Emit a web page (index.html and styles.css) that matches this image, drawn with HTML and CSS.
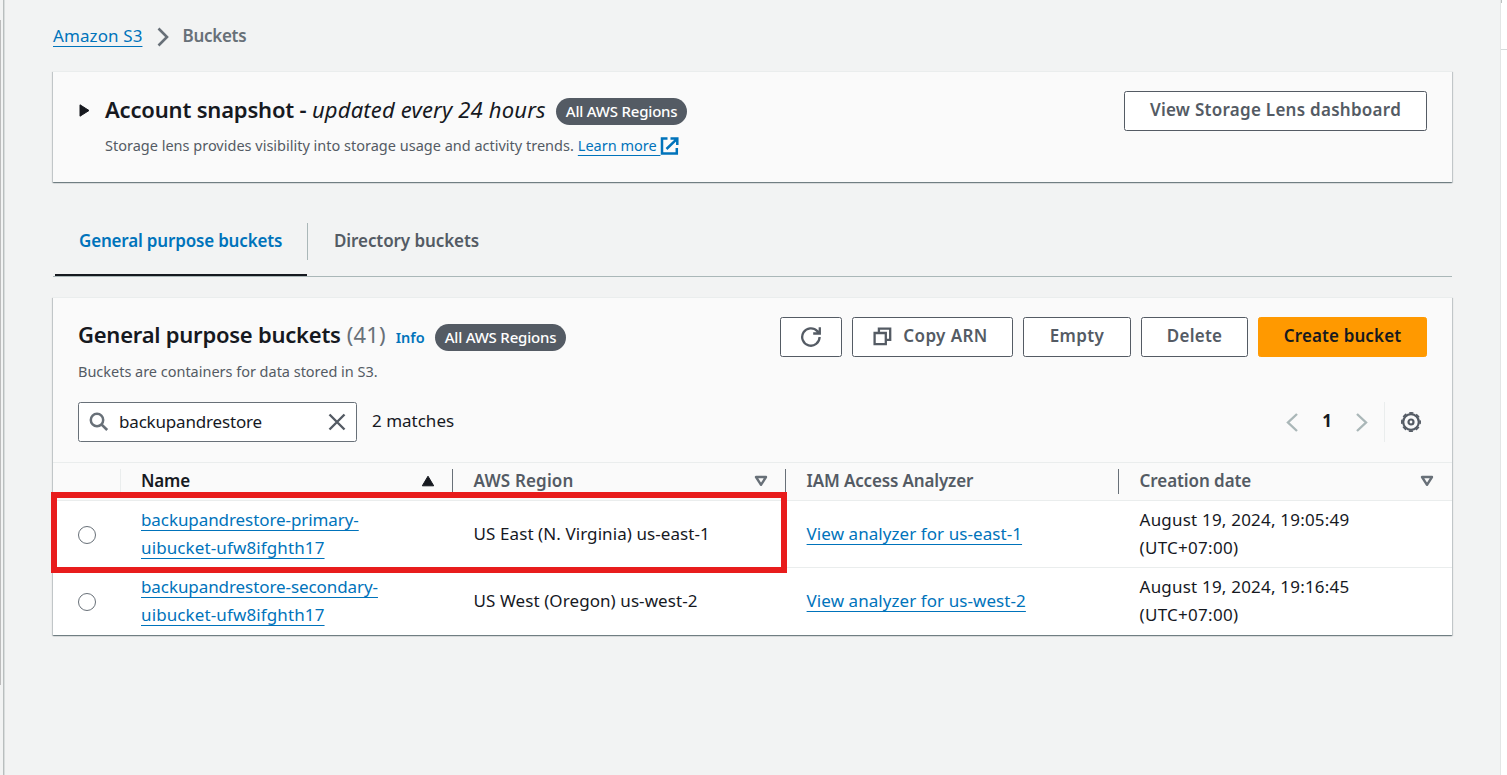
FILE: index.html
```html
<!DOCTYPE html>
<html lang="en">
<head>
<meta charset="utf-8">
<title>Buckets - Amazon S3</title>
<link rel="stylesheet" href="styles.css">
</head>
<body>
<div class="app">
  <div class="rail-left"><div class="scrollbar"></div></div>
  <main class="content">
    <nav class="breadcrumb">
      <a class="link crumb-link" href="#">Amazon S3</a>
      <svg class="crumb-sep" width="12" height="20" viewBox="0 0 12 20"><path d="M1.5 1.5 10 10 1.5 18.5" fill="none" stroke="#687078" stroke-width="2.6"/></svg>
      <span class="crumb-current">Buckets</span>
    </nav>

    <section class="card snapshot">
      <svg class="caret" width="11" height="13" viewBox="0 0 11 13"><path d="M1 .8 10 6.5 1 12.2z" fill="#16191f" stroke="#16191f" stroke-linejoin="round"/></svg>
      <div class="snapshot-body">
        <div class="title-line">
          <h2 class="title snap-title">Account snapshot - <em class="snap-em">updated every 24 hours</em></h2>
          <span class="badge">All AWS Regions</span>
        </div>
        <p class="desc snap-desc"><span class="snap-text">Storage lens provides visibility into storage usage and activity trends.</span> <a class="link learn" href="#">Learn more&nbsp;</a><svg class="ext" width="19" height="18" viewBox="0 0 19 18"><path d="M7.5 1.6H2v14.8h14.8V11M10.5 1.6h6.8V8M17 1.8 6.5 12" fill="none" stroke="#0073bb" stroke-width="2.5"/></svg></p>
      </div>
      <button class="btn btn-lens"><span class="t-lens">View Storage Lens dashboard</span></button>
    </section>

    <div class="tabs">
      <div class="tab tab-active"><span class="t-tab1">General purpose buckets</span></div>
      <div class="tab"><span class="t-tab2">Directory buckets</span></div>
    </div>

    <section class="card buckets">
      <header class="buckets-head">
        <div class="head-text">
          <div class="title-line">
            <h2 class="title buckets-title">General purpose buckets</h2>
            <span class="count">(41)</span>
            <a class="info" href="#">Info</a>
            <span class="badge">All AWS Regions</span>
          </div>
          <p class="desc buckets-desc">Buckets are containers for data stored in S3.</p>
        </div>
        <div class="actions">
          <button class="btn btn-refresh"><svg width="22" height="22" viewBox="0 0 22 22"><path d="M19.6 11a8.7 8.7 0 1 1-2.3-5.9l1.5 1.6M19.8 1.2v6.3h-6.6" fill="none" stroke="#545b64" stroke-width="2.3"/></svg></button>
          <button class="btn btn-copy"><svg width="19" height="19" viewBox="0 0 19 19"><path d="M1.6 6h11.2v11.2H1.6zM5.9 5.5V1.7h11.3v11.2h-4" fill="none" stroke="#545b64" stroke-width="2.3"/></svg><span class="t-copy">Copy ARN</span></button>
          <button class="btn btn-empty"><span class="t-empty">Empty</span></button>
          <button class="btn btn-delete"><span class="t-delete">Delete</span></button>
          <button class="btn btn-create"><span class="t-create">Create bucket</span></button>
        </div>
      </header>

      <div class="toolbar">
        <div class="search">
          <svg width="20" height="20" viewBox="0 0 20 20"><circle cx="8" cy="8" r="6.2" fill="none" stroke="#687078" stroke-width="2.5"/><path d="m12.4 12.4 5.8 5.6" stroke="#687078" stroke-width="2.7"/></svg>
          <span class="search-text">backupandrestore</span>
          <svg width="18" height="18" viewBox="0 0 18 18"><path d="m1.5 1.5 15 15m0-15-15 15" stroke="#545b64" stroke-width="2.4"/></svg>
        </div>
        <span class="matches">2 matches</span>
        <div class="pager">
          <svg width="12" height="19" viewBox="0 0 12 19"><path d="M11 1 2 9.5 11 18" fill="none" stroke="#aab7b8" stroke-width="2.4"/></svg>
          <span class="page-no">1</span>
          <svg width="12" height="19" viewBox="0 0 12 19"><path d="m1 1 9 8.5L1 18" fill="none" stroke="#aab7b8" stroke-width="2.4"/></svg>
        </div>
        <div class="prefs">
          <svg width="22" height="22" viewBox="0 0 22 22"><circle cx="11" cy="11" r="7.8" fill="none" stroke="#545b64" stroke-width="2.2"/><circle cx="11" cy="11" r="9.2" fill="none" stroke="#545b64" stroke-width="1.6" stroke-dasharray="4.2 3.026" stroke-dashoffset="2.1"/><circle cx="11" cy="11" r="2.5" fill="none" stroke="#545b64" stroke-width="2.2"/></svg>
        </div>
      </div>

      <div class="table">
        <div class="row row-head">
          <div class="th th-check"></div>
          <div class="th th-name"><span class="h-name">Name</span><svg width="14" height="12" viewBox="0 0 14 12"><path d="M7 1.2 12.7 10.8H1.3z" fill="#16191f" stroke="#16191f" stroke-linejoin="round"/></svg></div>
          <div class="th"><span class="h-region">AWS Region</span><svg width="14" height="12" viewBox="0 0 14 12"><path d="M2 2h10L7 9.8z" fill="none" stroke="#687078" stroke-width="2.4" stroke-linejoin="round"/></svg></div>
          <div class="th"><span class="h-iam">IAM Access Analyzer</span></div>
          <div class="th"><span class="h-date">Creation date</span><svg width="14" height="12" viewBox="0 0 14 12"><path d="M2 2h10L7 9.8z" fill="none" stroke="#687078" stroke-width="2.4" stroke-linejoin="round"/></svg></div>
        </div>
        <div class="row">
          <div class="td-check"><span class="radio"></span></div>
          <div class="td td-name"><a class="link" href="#"><span class="c-primary">backupandrestore-primary-</span><br><span class="c-ui">uibucket-ufw8ifghth17</span></a></div>
          <div class="td"><span class="c-east">US East (N. Virginia) us-east-1</span></div>
          <div class="td"><a class="link c-view" href="#">View analyzer for us-east-1</a></div>
          <div class="td"><span class="c-date">August 19, 2024, 19:05:49</span><br><span class="c-utc">(UTC+07:00)</span></div>
          <div class="highlight"></div>
        </div>
        <div class="row row-last">
          <div class="td-check"><span class="radio"></span></div>
          <div class="td td-name"><a class="link" href="#"><span class="c-primary">backupandrestore-secondary-</span><br><span class="c-ui">uibucket-ufw8ifghth17</span></a></div>
          <div class="td"><span class="c-east">US West (Oregon) us-west-2</span></div>
          <div class="td"><a class="link c-view" href="#">View analyzer for us-west-2</a></div>
          <div class="td"><span class="c-date">August 19, 2024, 19:16:45</span><br><span class="c-utc">(UTC+07:00)</span></div>
        </div>
      </div>
    </section>
  </main>
  <div class="rail-right"><div class="rail-panel"></div></div>
</div>
</body>
</html>
```
FILE: styles.css
```css
* { box-sizing: border-box; }
body {
  margin: 0;
  font-family: "Noto Sans", "Open Sans", sans-serif;
  font-size: 17px;
  line-height: 28px;
  color: #16191f;
  background: #f2f3f3;
}
h2, p { margin: 0; }
.app { display: flex; width: 1507px; height: 775px; overflow: hidden; }
.rail-left { width: 5px; flex: none; padding-top: 20px; border-right: 1px solid #d9dddd; box-shadow: inset -1px 0 #b9bebe; }
.scrollbar { width: 1px; height: 665px; background: #bcbcbc; }
.rail-right { width: 7px; flex: none; border-left: 1px solid #e3e6e6; background: #fff; }
.rail-panel { height: 50px; border-bottom: 1px solid #d5dbdb; background: linear-gradient(#bcc0c0, #bcc0c0) 0 0 / 1px 3px no-repeat; }
.content { flex: 1; padding: 0 48px; white-space: nowrap; }

.link { color: #0073bb; text-decoration: underline; text-decoration-thickness: 1px; text-underline-offset: 4px; text-decoration-skip-ink: none; }
.card { border-top: 1px solid #eaeded; box-shadow: 0 1px 1px rgba(0,28,36,.36), 1px 1px 1px rgba(0,28,36,.15), -1px 1px 1px rgba(0,28,36,.15); background: #fafafa; }

.breadcrumb { display: flex; height: 71px; align-items: center; }
.crumb-link { letter-spacing: .1px; }
.crumb-sep { margin: 3px 13.5px 0 14.6px; }
.crumb-current { color: #687078; font-weight: 600; letter-spacing: -.3px; }

.snapshot { display: flex; height: 111px; padding: 19px 25px 0 26px; align-items: flex-start; }
.caret { margin: 13px 15px 0 0; }
.snapshot-body { flex: 1; }
.title-line { display: flex; height: 38px; align-items: center; }
.title { padding-bottom: 3px; font-size: 22px; font-weight: 600; line-height: 28px; letter-spacing: -.24px; }
.snap-title { letter-spacing: -.19px; }
.snap-em { font-weight: 400; letter-spacing: .17px; }
.badge { height: 27px; margin: 2px 0 0 10px; padding: 0 10px; border-radius: 14px; background: #545b64; color: #fff; font-size: 15px; line-height: 27px; font-weight: 500; letter-spacing: -.2px; }
.desc { display: flex; font-size: 14.5px; line-height: 20px; color: #545b64; }
.snap-desc { padding-top: 6px; }
.snap-text { margin-right: 4px; }
.ext { margin-top: 2px; }

.btn { display: flex; align-items: center; justify-content: center; height: 40px; padding: 0 0 2px; border: 1px solid #545b64; border-radius: 2.5px; background: #fff; color: #545b64; font: 600 17px/28px "Noto Sans", "Open Sans", sans-serif; }
.btn-lens { width: 303px; }
.t-lens { letter-spacing: .27px; }

.tabs { display: flex; height: 95px; padding: 24px 0 0 2px; border-bottom: 1px solid #aab7b8; margin: 0 0 20px; }
.tab { padding: 21px 25px 0 27px; color: #545b64; font-weight: 600; letter-spacing: -.09px; }
.tab-active { position: relative; width: 252px; padding-left: 24px; border-bottom: 2px solid #16191f; color: #0073bb; letter-spacing: -.18px; }
.tab-active::after { content: ""; position: absolute; top: 17px; right: -1px; width: 1px; height: 37px; background: #aab7b8; }

.buckets { height: 338px; }
.buckets-head { display: flex; justify-content: space-between; height: 104px; padding: 19px 25px 0; }
.buckets-title, .count { padding-bottom: 5px; }
.count { margin: 0 0 0 6px; color: #687078; font-size: 22px; letter-spacing: .15px; }
.info { margin: 1px 0 0 10px; color: #0073bb; font-size: 14.5px; font-weight: 600; text-decoration: none; }
.buckets-desc { padding-top: 6px; letter-spacing: -.02px; }
.actions { display: flex; gap: 10px; }
.btn-refresh { width: 62px; padding: 0; }
.btn-copy { width: 161px; gap: 11px; padding-right: 4px; }
.btn-copy svg { margin-top: 1px; }
.t-copy, .t-empty { letter-spacing: .4px; }
.btn-empty { width: 108px; }
.btn-delete { width: 107px; }
.t-delete { letter-spacing: .25px; }
.btn-create { width: 169px; border-color: #ff9900; background: #ff9900; color: #16191f; }
.t-create { letter-spacing: .12px; }

.toolbar { display: flex; height: 60px; padding: 0 30px 0 25px; }
.search { display: flex; align-items: center; width: 279px; height: 40px; padding: 0 10px 0 9.5px; border: 1px solid #687078; border-radius: 2.5px; background: #fff; }
.search-text { flex: 1; margin-left: 10.5px; letter-spacing: -.18px; }
.matches { margin: 5px 0 0 15px; }
.pager { display: flex; align-items: center; height: 40px; margin-left: auto; }
.page-no { width: 10px; margin: 0 24px 2px; font-weight: 700; text-align: center; }
.prefs { display: flex; align-items: center; height: 40px; margin-left: 16px; padding-left: 15px; border-left: 1px solid #eaeded; }

.table { border-top: 1px solid #eaeded; }
.row { position: relative; display: grid; grid-template-columns: 68px 332px 333px 333px 333px; height: 67px; align-items: center; border-bottom: 1px solid #eaeded; background: #fff; }
.row-head { height: 38px; background: #fafafa; align-items: start; }
.row-last { border-bottom-color: #fff; }
.th { display: flex; align-items: center; justify-content: space-between; height: 25px; margin-top: 6px; padding: 0 17px 2px 20.6px; border-right: 1px solid #687078; color: #545b64; font-weight: 600; }
.th:last-child { padding-right: 18px; border-right: 0; }
.th-check { border-right-color: #eaeded; }
.th-name { padding-left: 20px; color: #16191f; }
.h-name { letter-spacing: -.2px; }
.h-region { letter-spacing: .15px; }
.h-iam { letter-spacing: -.15px; }
.h-date { letter-spacing: -.08px; }
.td { padding-left: 20.6px; }
.td-name { padding-left: 20px; }
.c-primary { letter-spacing: -.08px; }
.c-ui { letter-spacing: .12px; }
.c-east { letter-spacing: .08px; }
.c-view { letter-spacing: .07px; }
.c-date { letter-spacing: .2px; }
.c-utc { letter-spacing: .28px; }
.td-check { padding: 1px 0 0 25px; }
.radio { display: block; width: 18px; height: 18px; border: 1.3px solid #687078; border-radius: 50%; }
.highlight { position: absolute; z-index: 1; left: -2px; top: -9px; width: 736px; height: 81px; border: 6px solid #e81c1c; }
```
